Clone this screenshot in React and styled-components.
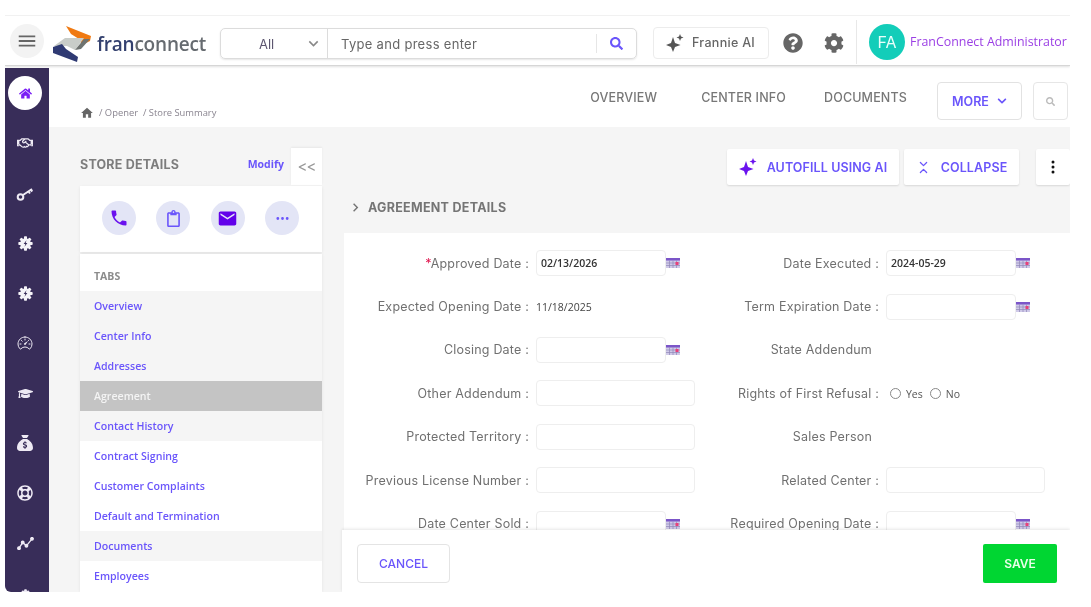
import React from 'react';
import styled, { createGlobalStyle } from 'styled-components';
import { ChevronsDownUp } from 'lucide-react';
import {
  FaHome, FaRegHandshake, FaGraduationCap, FaRegLifeRing, FaQuestionCircle, FaCog, FaSearch,
  FaChevronDown, FaRegClipboard,
} from 'react-icons/fa';
import { FaSackDollar } from 'react-icons/fa6';
import { IoSpeedometerOutline } from 'react-icons/io5';
import { MdPhone, MdEmail, MdHome, MdMenu, MdKeyboardArrowDown, MdChevronRight } from 'react-icons/md';
import { BsThreeDots, BsThreeDotsVertical } from 'react-icons/bs';

const UI_FONT = '"Inter", "Liberation Sans", sans-serif';
const TEXT_FONT = '"Open Sans", "Liberation Sans", sans-serif';
const PURPLE = '#6a55fb';

const Global = createGlobalStyle`
  html, body { margin: 0; padding: 0; background: #fff; }
  * { box-sizing: border-box; }
`;

const Page = styled.div`
  width: 1091px;
  height: 607px;
  padding: 15px 21px 15px 5px;
  background: #fff;
  overflow: hidden;
  filter: blur(0.6px);
`;

const Shell = styled.div`
  width: 1065px;
  height: 577px;
  display: flex;
  flex-direction: column;
  font-family: ${UI_FONT};
  overflow: hidden;
`;

const TopBar = styled.header`
  flex: 0 0 51px;
  display: flex;
  align-items: center;
  padding: 0 0 0 5px;
  background: #fff;
  border-top: 1px solid #f1f1f1;
  border-bottom: 1px solid #d6d6d6;
  box-shadow: 0 1px 2px rgba(0, 0, 0, 0.12);
  position: relative;
  z-index: 2;
`;

const Burger = styled.div`
  width: 34px;
  height: 34px;
  border-radius: 50%;
  background: #f3f3f3;
  color: #666;
  display: flex;
  align-items: center;
  justify-content: center;
  font-size: 22px;
  margin-right: 9px;
`;

const Logo = styled.div`
  width: 167px;
  display: flex;
  align-items: center;
  gap: 5px;
  margin-top: 7px;
  font-family: ${TEXT_FONT};
  font-size: 19px;
  font-weight: 600;
  letter-spacing: -0.2px;
  color: #666b70;
  span { color: #33406e; }
`;

const SearchBox = styled.div`
  width: 417px;
  height: 31px;
  margin-top: 6px;
  display: flex;
  align-items: center;
  border: 1px solid #dcdcdc;
  border-radius: 5px;
  box-shadow: 0 1px 2px rgba(0, 0, 0, 0.1);
  font-size: 13px;
  color: #555;
`;

const ScopeSelect = styled.div`
  flex: 0 0 107px;
  height: 100%;
  display: flex;
  align-items: center;
  justify-content: space-between;
  padding: 0 4px 0 38px;
  border-right: 1px solid #dcdcdc;
  color: #5d5670;
  svg { color: #888; font-size: 19px; }
`;

const SearchText = styled.div`
  flex: 1;
  padding-left: 13px;
  letter-spacing: 0.3px;
  color: #666;
`;

const SearchIcon = styled.div`
  flex: 0 0 40px;
  height: 19px;
  display: flex;
  align-items: center;
  justify-content: center;
  border-left: 1px solid #e6e6e6;
  color: ${PURPLE};
  font-size: 13px;
`;

const FrannieButton = styled.div`
  width: 116px;
  height: 32px;
  margin: 4px 0 0 16px;
  display: flex;
  align-items: center;
  gap: 8px;
  padding-left: 12px;
  border: 1px solid #ececec;
  border-radius: 4px;
  font-size: 12.5px;
  letter-spacing: 0.3px;
  font-weight: 500;
  color: #666;
`;

const ToolIcon = styled.div`
  color: #666;
  font-size: 20px;
  display: flex;
  margin: 5px 0 0 ${(p) => p.$left}px;
`;

const UserBox = styled.div`
  height: 44px;
  margin: 2px 0 0 12px;
  padding-left: 12px;
  border-left: 1px solid #e8e8e8;
  display: flex;
  align-items: center;
  gap: 5px;
  white-space: nowrap;
`;

const Avatar = styled.div`
  width: 36px;
  height: 36px;
  border-radius: 50%;
  background: #13cdb9;
  color: #eafffb;
  display: flex;
  align-items: center;
  justify-content: center;
  font-size: 16px;
`;

const UserName = styled.div`
  font-family: ${TEXT_FONT};
  font-size: 12.4px;
  color: #9b3fe4;
`;

const Body = styled.div`
  flex: 1;
  min-height: 0;
  display: flex;
  padding-top: 2px;
`;

const Rail = styled.nav`
  flex: 0 0 44px;
  background: #382d59;
  border-bottom-left-radius: 6px;
  display: flex;
  flex-direction: column;
  align-items: center;
  padding: 8px 4px 0 0;
  overflow: hidden;
`;

const RailItem = styled.div`
  flex: 0 0 ${(p) => (p.$active ? 34 : 50)}px;
  width: 34px;
  display: flex;
  align-items: center;
  justify-content: center;
  color: #eeeaf4;
  font-size: 15px;
  ${(p) => p.$active && `
    background: #fff;
    border-radius: 50%;
    color: #7a1ff5;
    margin-bottom: 8px;
    font-size: 13px;
  `}
`;

const Main = styled.main`
  flex: 1;
  min-width: 0;
  display: flex;
  flex-direction: column;
`;

const SubHeader = styled.div`
  flex: 0 0 59px;
  background: #fff;
  display: flex;
  padding-right: 2px;
`;

const Crumbs = styled.div`
  flex: 1;
  padding: 38px 0 0 31px;
  display: flex;
  align-items: flex-start;
  gap: 4px;
  font-family: ${TEXT_FONT};
  font-size: 9.4px;
  line-height: 14px;
  color: #8a8590;
  svg { font-size: 14px; color: #666; margin-right: 1px; }
`;

const TabLink = styled.div`
  margin: 22px ${(p) => p.$gap}px 0 0;
  font-size: 12.5px;
  line-height: 16px;
  font-weight: 500;
  letter-spacing: 0.15px;
  color: #777;
  white-space: nowrap;
`;

const MoreButton = styled.div`
  width: 85px;
  height: 38px;
  margin: 14px 11px 0 30px;
  display: flex;
  align-items: center;
  justify-content: center;
  gap: 8px;
  border: 1px solid #e2e2e2;
  border-radius: 4px;
  color: ${PURPLE};
  font-size: 12.5px;
  font-weight: 600;
  svg { font-size: 10px; }
`;

const MiniSearch = styled.div`
  width: 35px;
  height: 38px;
  margin-top: 14px;
  display: flex;
  align-items: center;
  justify-content: center;
  border: 1px solid #e6e6e6;
  border-radius: 4px;
  color: #bbb;
  font-size: 9px;
`;

const Content = styled.div`
  flex: 1;
  min-height: 0;
  display: flex;
  background: #f5f5f5;
  padding-left: 31px;
  overflow: hidden;
`;

const LeftPanel = styled.aside`
  flex: 0 0 242px;
  display: flex;
  flex-direction: column;
  margin-right: 22px;
`;

const PanelHead = styled.div`
  flex: 0 0 59px;
  display: flex;
  align-items: flex-start;
`;

const PanelTitle = styled.div`
  flex: 1;
  margin-top: 30px;
  font-size: 12.5px;
  line-height: 16px;
  font-weight: 700;
  letter-spacing: 0.2px;
  white-space: nowrap;
  color: #7d7d7d;
`;

const ModifyLink = styled.div`
  margin: 29px 7px 0 0;
  font-family: ${TEXT_FONT};
  font-size: 10.5px;
  line-height: 16px;
  font-weight: 700;
  color: ${PURPLE};
`;

const CollapseTab = styled.div`
  width: 31px;
  height: 37px;
  margin-top: 21px;
  background: #fff;
  box-shadow: 0 -1px 2px rgba(0, 0, 0, 0.06);
  display: flex;
  align-items: center;
  justify-content: center;
  color: #999;
  font-size: 15px;
  letter-spacing: -1px;
`;

const ActionCard = styled.div`
  flex: 0 0 66px;
  background: #fff;
  display: flex;
  align-items: center;
  gap: 20.5px;
  padding: 0 0 2px 21.5px;
  box-shadow: 0 1px 3px rgba(0, 0, 0, 0.08);
`;

const ActionCircle = styled.div`
  width: 34px;
  height: 34px;
  border-radius: 50%;
  background: #e3e5f6;
  display: flex;
  align-items: center;
  justify-content: center;
  color: ${(p) => p.$color};
  font-size: ${(p) => p.$size}px;
`;

const TabsCard = styled.div`
  flex: 1;
  margin-top: 2px;
  background: #fff;
  box-shadow: 0 0 3px rgba(0, 0, 0, 0.08);
`;

const TabsTitle = styled.div`
  height: 37px;
  padding: 16px 0 0 14px;
  font-family: ${TEXT_FONT};
  font-size: 10.5px;
  line-height: 12px;
  font-weight: 700;
  color: #8c8c8c;
`;

const TabRow = styled.div`
  height: 30px;
  display: flex;
  align-items: center;
  padding-left: 14px;
  font-family: ${TEXT_FONT};
  font-size: 10.6px;
  font-weight: 600;
  background: ${(p) => (p.$active ? '#c4c4c4' : p.$shaded ? '#f5f5f5' : '#fff')};
  color: ${(p) => (p.$active ? '#f4f4f4' : PURPLE)};
`;

const RightPanel = styled.section`
  flex: 1;
  min-width: 0;
  display: flex;
  flex-direction: column;
  position: relative;
`;

const ActionBar = styled.div`
  flex: 0 0 57px;
  display: flex;
  align-items: flex-start;
  padding: 22px 0 0 383px;
`;

const BarButton = styled.div`
  height: 36px;
  width: ${(p) => p.$width}px;
  margin-right: ${(p) => p.$gap}px;
  background: #fff;
  border-radius: 2px;
  box-shadow: 0 1px 2px rgba(0, 0, 0, 0.12);
  display: flex;
  align-items: center;
  justify-content: center;
  gap: 10px;
  color: ${PURPLE};
  font-size: 12.5px;
  letter-spacing: 0.1px;
  font-weight: 600;
  white-space: nowrap;
`;

const KebabButton = styled(BarButton)`
  color: #111;
  font-size: 16px;
`;

const SectionTitle = styled.div`
  flex: 0 0 49px;
  display: flex;
  align-items: center;
  gap: 4px;
  padding: 0 0 3px 3px;
  margin-top: -1px;
  font-size: 12.5px;
  letter-spacing: 0.28px;
  font-weight: 700;
  color: #757575;
  svg { font-size: 17px; }
`;

const FormCard = styled.div`
  flex: 1;
  min-height: 0;
  background: #fff;
  padding-top: 8.5px;
  overflow: hidden;
`;

const FormGrid = styled.div`
  display: grid;
  grid-template-columns: 192px 175px 175px 1fr;
  grid-auto-rows: 43.4px;
  align-items: center;
`;

const FieldLabel = styled.div`
  text-align: right;
  padding-right: ${(p) => (p.$plain ? 14 : 7)}px;
  font-size: 12.5px;
  letter-spacing: 0.2px;
  color: #707070;
  white-space: nowrap;
  i { color: #e0164e; font-style: normal; }
`;

const FieldCell = styled.div`
  display: flex;
  align-items: center;
  font-family: ${TEXT_FONT};
  font-size: 10.5px;
  color: #444;
`;

const FieldInput = styled.div`
  width: ${(p) => (p.$wide ? 159 : 130)}px;
  height: 26px;
  flex: none;
  padding-left: 4px;
  display: flex;
  align-items: center;
  border: 1px solid #eeeeee;
  border-radius: 4px;
  background: #fff;
  color: #333;
  font-weight: 600;
`;

const RadioDot = styled.span`
  width: 11px;
  height: 11px;
  border: 1px solid #888;
  border-radius: 50%;
  margin: 0 5px 0 ${(p) => (p.$first ? 4 : 7)}px;
`;

const RadioText = styled.span`
  font-size: 10.5px;
  margin-top: 2px;
  color: #555;
`;

const FooterBar = styled.div`
  position: absolute;
  left: -2px;
  right: 0;
  bottom: 0;
  height: 62px;
  background: #fff;
  box-shadow: 0 -1px 3px rgba(0, 0, 0, 0.1);
  display: flex;
  align-items: flex-start;
  justify-content: space-between;
  padding: 14px 13px 0 15px;
`;

const CancelButton = styled.div`
  width: 93px;
  height: 39px;
  display: flex;
  align-items: center;
  justify-content: center;
  border: 1px solid #e4e4e4;
  border-radius: 4px;
  color: ${PURPLE};
  font-size: 12px;
  font-weight: 500;
`;

const SaveButton = styled.div`
  width: 74px;
  height: 39px;
  display: flex;
  align-items: center;
  justify-content: center;
  border-radius: 2px;
  background: #00d632;
  color: #e9ffe9;
  font-size: 12px;
  font-weight: 600;
`;

function LogoMark() {
  return (
    <svg width="39" height="38" viewBox="0 0 39 38">
      <path d="M13 1 L38 11 L37 16 L29 20 L26 14 L18 9 Z" fill="#f07a12" />
      <path d="M1 21 L12 13 L31 13 L22 25 L14 21 Z" fill="#c9cdc9" />
      <path d="M22 25 L31 14 L37 14 L28 24 Z" fill="#6e7370" />
      <path d="M0 22 L9 19 L13 24 L25 32 L24 37 L0 28 Z" fill="#2f3a73" />
    </svg>
  );
}

function Sparkle({ color, size = 18 }) {
  return (
    <svg width={size} height={size} viewBox="0 0 18 18">
      <path d="M7 3 L9 9 L14.5 11 L9 13 L7 18 L5 13 L0 11 L5 9 Z" fill={color} />
      <path d="M14 0 L15 2.5 L17.5 3.5 L15 4.5 L14 7 L13 4.5 L10.5 3.5 L13 2.5 Z" fill={color} />
    </svg>
  );
}

function KeyIcon() {
  return (
    <svg width="18" height="18" viewBox="0 0 18 18" fill="none" stroke="#eeeaf4">
      <circle cx="4.5" cy="13" r="2.8" strokeWidth="2" />
      <path d="M7 11 L16 5 M12.5 7.5 L14 9.5 M15 6 L16.3 7.5" strokeWidth="2" />
    </svg>
  );
}

function BoltGear() {
  const teeth = [0, 45, 90, 135];
  return (
    <svg width="15" height="15" viewBox="0 0 17 17">
      <circle cx="8.5" cy="8.5" r="6" fill="#f5f3f8" />
      {teeth.map((a) => (
        <rect key={a} x="6.8" y="0.4" width="3.4" height="16.2" rx="0.8" fill="#f5f3f8" transform={`rotate(${a} 8.5 8.5)`} />
      ))}
      <path d="M9.6 4.8 L6.4 9.2 L8.3 9.2 L7.4 12.2 L10.6 7.8 L8.7 7.8 Z" fill="#382d59" />
    </svg>
  );
}

function TrendIcon() {
  return (
    <svg width="17" height="13" viewBox="0 0 18 14" fill="none" stroke="#eeeaf4" strokeWidth="1.4">
      <path d="M2 12 L6 6 L10 9.5 L16 2" />
      <circle cx="2" cy="12" r="1.4" fill="#eeeaf4" />
      <circle cx="6" cy="6" r="1.4" fill="#eeeaf4" />
      <circle cx="10" cy="9.5" r="1.4" fill="#eeeaf4" />
      <circle cx="16" cy="2" r="1.4" fill="#eeeaf4" />
    </svg>
  );
}

function CalendarIcon() {
  return (
    <svg width="29" height="12" viewBox="0 0 29 12">
      <rect x="0" y="1" width="14" height="10" fill="#cfc9e8" />
      <rect x="0" y="1" width="14" height="2.5" fill="#7b55c8" />
      <path d="M3.5 3.5 V11 M7 3.5 V11 M10.5 3.5 V11 M0 6 H14 M0 8.5 H14" stroke="#8f86b8" strokeWidth="0.7" />
      <rect x="9.5" y="5" width="3" height="3" fill="#e8407a" />
    </svg>
  );
}

const TABS = [
  { label: 'Overview', shaded: true },
  { label: 'Center Info', shaded: true },
  { label: 'Addresses', shaded: true },
  { label: 'Agreement', active: true },
  { label: 'Contact History', shaded: true },
  { label: 'Contract Signing' },
  { label: 'Customer Complaints' },
  { label: 'Default and Termination' },
  { label: 'Documents', shaded: true },
  { label: 'Employees' },
];

function DateField({ value }) {
  return (
    <FieldCell>
      <FieldInput>{value}</FieldInput>
      <CalendarIcon />
    </FieldCell>
  );
}

function TextField() {
  return (
    <FieldCell>
      <FieldInput $wide />
    </FieldCell>
  );
}

export default function App() {
  return (
    <Page>
      <Global />
      <Shell>
        <TopBar>
          <Burger><MdMenu /></Burger>
          <Logo>
            <LogoMark />
            <div><span>fran</span>connect</div>
          </Logo>
          <SearchBox>
            <ScopeSelect>All <MdKeyboardArrowDown /></ScopeSelect>
            <SearchText>Type and press enter</SearchText>
            <SearchIcon><FaSearch /></SearchIcon>
          </SearchBox>
          <FrannieButton><Sparkle color="#555" />Frannie AI</FrannieButton>
          <ToolIcon $left={14}><FaQuestionCircle /></ToolIcon>
          <ToolIcon $left={21}><FaCog /></ToolIcon>
          <UserBox>
            <Avatar>FA</Avatar>
            <UserName>FranConnect Administrator</UserName>
          </UserBox>
        </TopBar>
        <Body>
          <Rail>
            <RailItem $active><FaHome /></RailItem>
            <RailItem><FaRegHandshake size={16} /></RailItem>
            <RailItem><KeyIcon /></RailItem>
            <RailItem><BoltGear /></RailItem>
            <RailItem><BoltGear /></RailItem>
            <RailItem><IoSpeedometerOutline size={16} /></RailItem>
            <RailItem><FaGraduationCap size={15} /></RailItem>
            <RailItem><FaSackDollar size={16} /></RailItem>
            <RailItem><FaRegLifeRing size={16} /></RailItem>
            <RailItem><TrendIcon /></RailItem>
            <RailItem><FaCog size={9} /></RailItem>
          </Rail>
          <Main>
            <SubHeader>
              <Crumbs><MdHome /> / Opener &nbsp;/ Store Summary</Crumbs>
              <TabLink $gap={44}>OVERVIEW</TabLink>
              <TabLink $gap={38}>CENTER INFO</TabLink>
              <TabLink $gap={0}>DOCUMENTS</TabLink>
              <MoreButton>MORE <FaChevronDown /></MoreButton>
              <MiniSearch><FaSearch /></MiniSearch>
            </SubHeader>
            <Content>
              <LeftPanel>
                <PanelHead>
                  <PanelTitle>STORE DETAILS</PanelTitle>
                  <ModifyLink>Modify</ModifyLink>
                  <CollapseTab>&lt;&lt;</CollapseTab>
                </PanelHead>
                <ActionCard>
                  <ActionCircle $color="#6a12ee" $size={20}><MdPhone /></ActionCircle>
                  <ActionCircle $color={PURPLE} $size={17}><FaRegClipboard /></ActionCircle>
                  <ActionCircle $color="#6200ea" $size={21}><MdEmail /></ActionCircle>
                  <ActionCircle $color={PURPLE} $size={15}><BsThreeDots /></ActionCircle>
                </ActionCard>
                <TabsCard>
                  <TabsTitle>TABS</TabsTitle>
                  {TABS.map((t) => (
                    <TabRow key={t.label} $active={t.active} $shaded={t.shaded}>{t.label}</TabRow>
                  ))}
                </TabsCard>
              </LeftPanel>
              <RightPanel>
                <ActionBar>
                  <BarButton $width={172} $gap={5}><Sparkle color="#6a12ee" />AUTOFILL USING AI</BarButton>
                  <BarButton $width={115} $gap={17}><ChevronsDownUp size={15} />COLLAPSE</BarButton>
                  <KebabButton $width={34} $gap={0}><BsThreeDotsVertical /></KebabButton>
                </ActionBar>
                <SectionTitle><MdChevronRight />AGREEMENT DETAILS</SectionTitle>
                <FormCard>
                  <FormGrid>
                    <FieldLabel><i>*</i>Approved Date :</FieldLabel>
                    <DateField value="02/13/2026" />
                    <FieldLabel>Date Executed :</FieldLabel>
                    <DateField value="2024-05-29" />

                    <FieldLabel>Expected Opening Date :</FieldLabel>
                    <FieldCell>11/18/2025</FieldCell>
                    <FieldLabel>Term Expiration Date :</FieldLabel>
                    <DateField />

                    <FieldLabel>Closing Date :</FieldLabel>
                    <DateField />
                    <FieldLabel $plain>State Addendum</FieldLabel>
                    <FieldCell />

                    <FieldLabel>Other Addendum :</FieldLabel>
                    <TextField />
                    <FieldLabel>Rights of First Refusal :</FieldLabel>
                    <FieldCell>
                      <RadioDot $first /><RadioText>Yes</RadioText>
                      <RadioDot /><RadioText>No</RadioText>
                    </FieldCell>

                    <FieldLabel>Protected Territory :</FieldLabel>
                    <TextField />
                    <FieldLabel $plain>Sales Person</FieldLabel>
                    <FieldCell />

                    <FieldLabel>Previous License Number :</FieldLabel>
                    <TextField />
                    <FieldLabel>Related Center :</FieldLabel>
                    <TextField />

                    <FieldLabel>Date Center Sold :</FieldLabel>
                    <DateField />
                    <FieldLabel>Required Opening Date :</FieldLabel>
                    <DateField />
                  </FormGrid>
                </FormCard>
                <FooterBar>
                  <CancelButton>CANCEL</CancelButton>
                  <SaveButton>SAVE</SaveButton>
                </FooterBar>
              </RightPanel>
            </Content>
          </Main>
        </Body>
      </Shell>
    </Page>
  );
}
